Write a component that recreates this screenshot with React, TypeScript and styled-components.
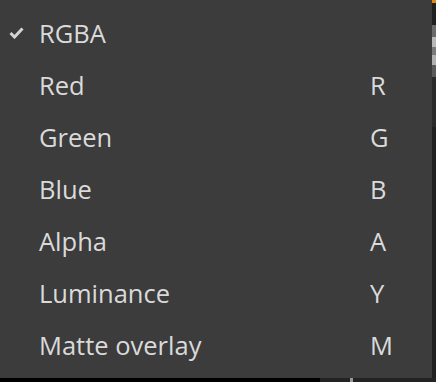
import React from 'react';
import styled, { createGlobalStyle } from 'styled-components';

const GlobalStyle = createGlobalStyle`
  html, body {
    margin: 0;
    padding: 0;
    background: #1f1f1f;
  }
`;

type Item = { label: string; key?: string; checked?: boolean };

const items: Item[] = [
  { label: 'RGBA', checked: true },
  { label: 'Red', key: 'R' },
  { label: 'Green', key: 'G' },
  { label: 'Blue', key: 'B' },
  { label: 'Alpha', key: 'A' },
  { label: 'Luminance', key: 'Y' },
  { label: 'Matte overlay', key: 'M' },
];

const Screen = styled.div`
  display: grid;
  grid-template-columns: 432px 4px;
  grid-template-rows: 378px 4px;
  width: 436px;
  height: 382px;
  overflow: hidden;
`;

const Menu = styled.ul`
  list-style: none;
  margin: 0;
  padding: 7px 0 7px;
  background: #3c3c3c;
  font-family: 'Open Sans', 'Noto Sans', sans-serif;
  color: #dadada;
`;

const Row = styled.li`
  display: grid;
  grid-template-columns: 39px 1fr 62px;
  align-items: center;
  height: 52px;
  font-size: 25.5px;
`;

const CheckCell = styled.span`
  display: flex;
  justify-content: center;
  padding-right: 6px;
`;

const Shortcut = styled.span`
  text-align: left;
`;

const SideStrip = styled.div`
  display: flex;
  flex-direction: column;
  background: #202020;
`;

const SideMark = styled.div<{ $h: number; $bg: string }>`
  height: ${(p) => p.$h}px;
  background: ${(p) => p.$bg};
`;

const BottomStrip = styled.div`
  display: grid;
  grid-template-columns: 320px 1fr;
  grid-column: 1 / span 2;
`;

const BottomBlack = styled.div`
  background: #000;
`;

const BottomDark = styled.div`
  background: #232323;
  display: flex;
  padding-left: 30px;
`;

const Tick = styled.div`
  width: 3px;
  background: #9a9a9a;
`;

const Check = () => (
  <svg width="15" height="12" viewBox="0 0 15 12">
    <polyline points="1.5,6 5.5,10 13.5,1.5" fill="none" stroke="#d4d4d4" strokeWidth="3" />
  </svg>
);

export default function App() {
  return (
    <>
      <GlobalStyle />
      <Screen>
        <Menu>
          {items.map((it) => (
            <Row key={it.label}>
              <CheckCell>{it.checked && <Check />}</CheckCell>
              <span>{it.label}</span>
              <Shortcut>{it.key}</Shortcut>
            </Row>
          ))}
        </Menu>
        <SideStrip>
          <SideMark $h={3} $bg="#e08a10" />
          <SideMark $h={22} $bg="#202020" />
          <SideMark $h={12} $bg="#6a6a6a" />
          <SideMark $h={10} $bg="#b8b8b8" />
          <SideMark $h={8} $bg="#7a7a7a" />
          <SideMark $h={10} $bg="#b0b0b0" />
          <SideMark $h={12} $bg="#5a5a5a" />
          <SideMark $h={50} $bg="#2a2a2a" />
        </SideStrip>
        <BottomStrip>
          <BottomBlack />
          <BottomDark>
            <Tick />
          </BottomDark>
        </BottomStrip>
      </Screen>
    </>
  );
}
